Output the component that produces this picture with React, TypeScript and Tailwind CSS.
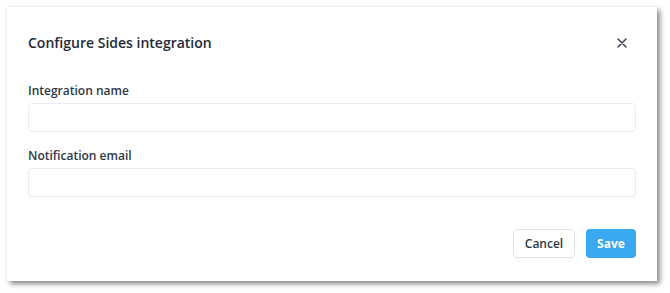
import { useState } from 'react';

function CloseIcon() {
  return (
    <svg width="10" height="10" viewBox="0 0 10 10" fill="none" aria-hidden="true">
      <path d="M1 1L9 9M9 1L1 9" stroke="#2d3748" strokeWidth="1.4" strokeLinecap="round" />
    </svg>
  );
}

function Field({ label, value, onChange }: { label: string; value: string; onChange: (v: string) => void }) {
  return (
    <div>
      <label className="block text-[12px] leading-[16px] font-semibold text-[#2d3748]">{label}</label>
      <input
        value={value}
        onChange={(e) => onChange(e.target.value)}
        className="mt-[4px] block h-[29px] w-full rounded-[4px] border border-[#e8ebef] bg-white px-3 text-[12px] text-[#2d3748] outline-none"
      />
    </div>
  );
}

export default function App() {
  const [name, setName] = useState('');
  const [email, setEmail] = useState('');

  return (
    <div className="min-h-screen bg-white pl-[7px] pt-[7px] font-['Open_Sans',sans-serif]">
      <div className="flex h-[274px] w-[650px] flex-col bg-white px-[21px] pt-[26px] shadow-[3px_3px_5px_rgba(0,0,0,0.45),0_0_4px_rgba(0,0,0,0.06)]">
        <div className="flex h-[20px] items-center justify-between">
          <h2 className="text-[14px] leading-[20px] font-semibold text-[#1f2a37]">Configure Sides integration</h2>
          <button className="mr-[6px] flex h-4 w-4 items-center justify-center">
            <CloseIcon />
          </button>
        </div>

        <div className="mt-[30px] flex flex-col gap-[16px]">
          <Field label="Integration name" value={name} onChange={setName} />
          <Field label="Notification email" value={email} onChange={setEmail} />
        </div>

        <div className="mt-[32px] flex justify-end gap-[11px]">
          <button className="h-[29px] w-[62px] rounded-[4px] border border-[#dfe3e8] bg-white text-[12px] font-semibold text-[#2d3748]">
            Cancel
          </button>
          <button className="h-[29px] w-[50px] rounded-[4px] bg-[#38a9f0] text-[12px] font-bold text-white">
            Save
          </button>
        </div>
      </div>
    </div>
  );
}
